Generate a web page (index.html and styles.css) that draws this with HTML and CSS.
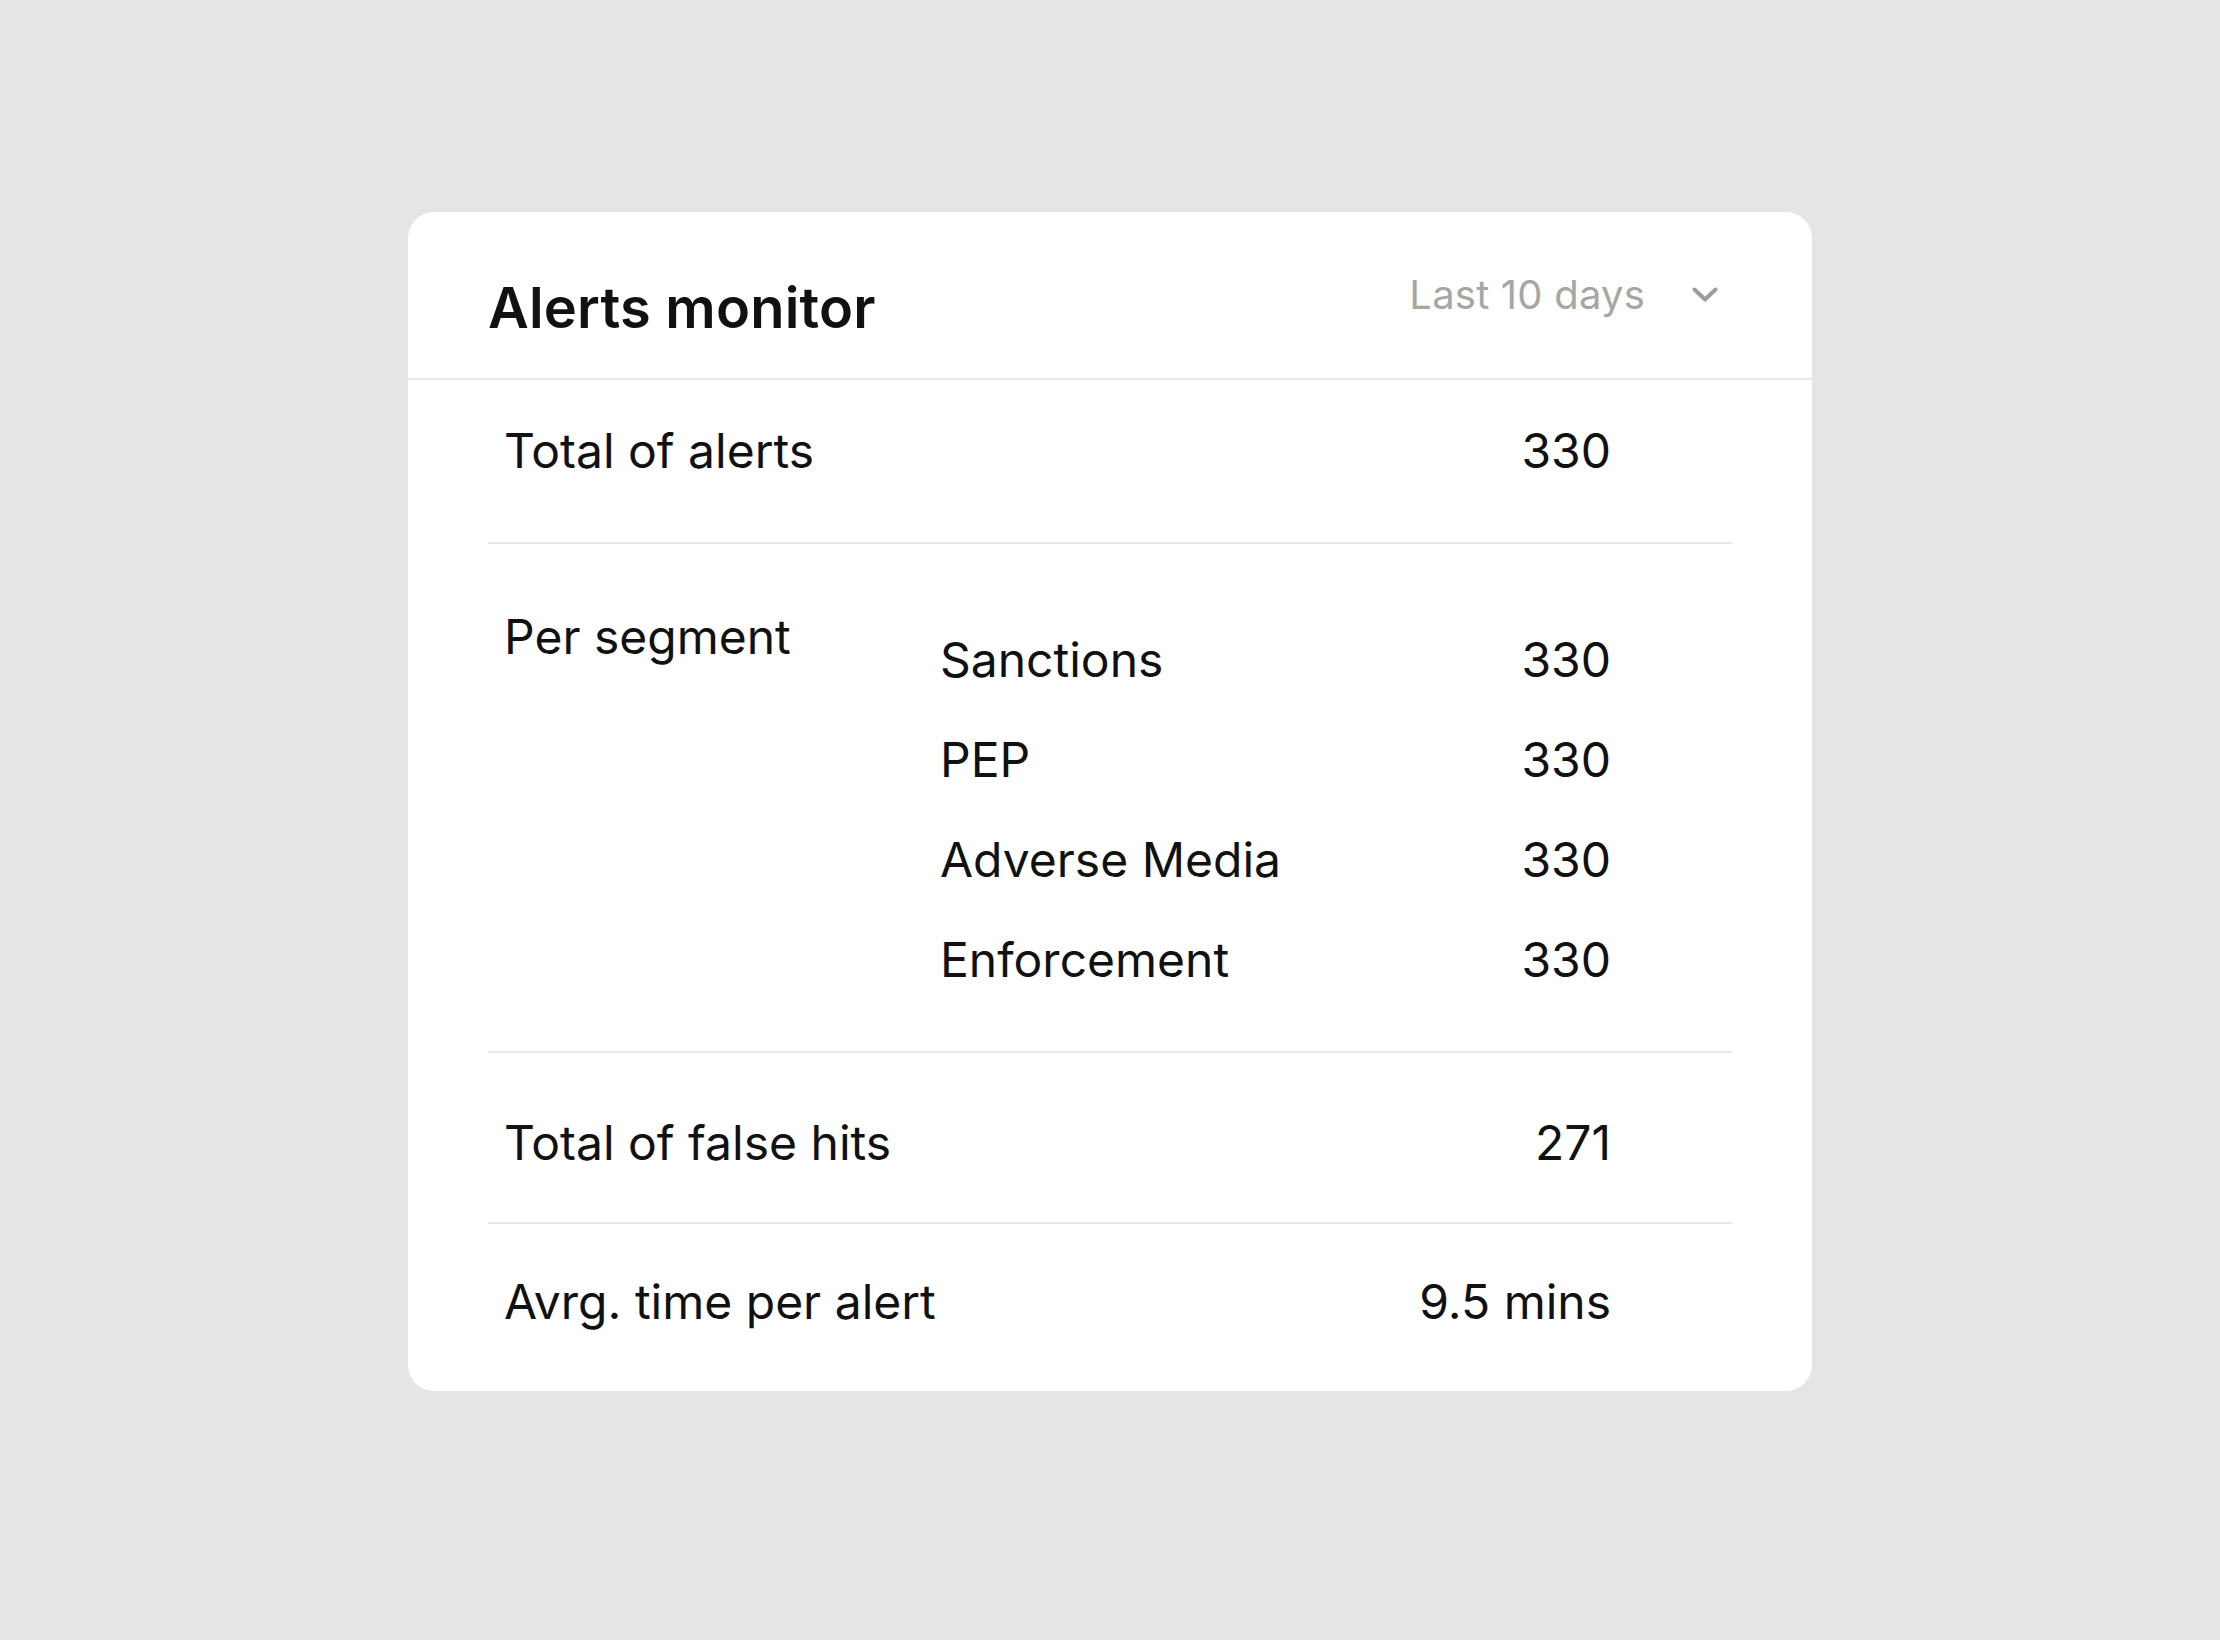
FILE: index.html
```html
<!DOCTYPE html>
<html lang="en">
<head>
<meta charset="utf-8">
<title>Alerts monitor</title>
<link rel="stylesheet" href="styles.css">
</head>
<body>
<section class="card">
  <header class="card-header">
    <h1 class="card-title">Alerts monitor</h1>
    <button class="range-select" type="button">
      <span class="range-label">Last 10 days</span>
      <svg class="chevron" width="26" height="16" viewBox="0 0 26 16" aria-hidden="true">
        <polyline points="2.5,2.5 13,12.5 23.5,2.5" fill="none" stroke="currentColor" stroke-width="4" stroke-linecap="round" stroke-linejoin="round"/>
      </svg>
    </button>
  </header>
  <div class="card-body">
    <div class="stat-row row-total">
      <span class="stat-label">Total of alerts</span>
      <span class="stat-value">330</span>
    </div>
    <div class="stat-row row-segment">
      <span class="stat-label">Per segment</span>
      <ul class="segment-list">
        <li class="segment-item"><span>Sanctions</span><span class="stat-value">330</span></li>
        <li class="segment-item"><span>PEP</span><span class="stat-value">330</span></li>
        <li class="segment-item"><span>Adverse Media</span><span class="stat-value">330</span></li>
        <li class="segment-item"><span>Enforcement</span><span class="stat-value">330</span></li>
      </ul>
    </div>
    <div class="stat-row row-false">
      <span class="stat-label">Total of false hits</span>
      <span class="stat-value">271</span>
    </div>
    <div class="stat-row row-time">
      <span class="stat-label">Avrg. time per alert</span>
      <span class="stat-value">9.5 mins</span>
    </div>
  </div>
</section>
</body>
</html>
```

FILE: styles.css
```css
* {
  box-sizing: border-box;
}

html, body {
  margin: 0;
  padding: 0;
}

body {
  background: #e6e5e3;
  font-family: Inter, "Noto Sans", "Liberation Sans", sans-serif;
  color: #111111;
  padding-top: 212px;
  min-height: 1640px;
}

.card {
  width: 1404px;
  margin: 0 auto;
  background: #ffffff;
  border-radius: 26px;
  overflow: hidden;
}

.card-header {
  display: flex;
  align-items: flex-start;
  justify-content: space-between;
  padding: 60px 94px 42px 80px;
  border-bottom: 2px solid #e7e7e5;
}

.card-title {
  margin: 8px 0 0 0;
  font-size: 56px;
  line-height: 56px;
  font-weight: 600;
  letter-spacing: 0.2px;
  color: #111111;
}

.range-select {
  display: flex;
  align-items: center;
  margin: 3px 0 0 0;
  padding: 0;
  border: 0;
  background: none;
  font-family: inherit;
  cursor: pointer;
  height: 40px;
}

.range-label {
  font-size: 40px;
  line-height: 40px;
  font-weight: 400;
  letter-spacing: 0.2px;
  color: #a6a6a2;
}

.chevron {
  display: block;
  margin-left: 47px;
  margin-top: 0;
  color: #9c9c98;
}

.card-body {
  padding: 0 80px;
}

.stat-row {
  display: flex;
  align-items: flex-start;
  justify-content: space-between;
  padding-left: 16px;
  padding-right: 121px;
  font-size: 48px;
  line-height: 48px;
  border-bottom: 2px solid #e7e7e5;
}

.row-total {
  padding-top: 47px;
  padding-bottom: 67px;
}

.row-segment {
  padding-top: 69px;
  padding-bottom: 67px;
}

.row-false {
  padding-top: 66px;
  padding-bottom: 55px;
}

.row-time {
  padding-top: 54px;
  padding-bottom: 65px;
  border-bottom: 0;
}

.stat-label {
  white-space: nowrap;
}

.row-segment .stat-label {
  flex: 0 0 436px;
}

.segment-list {
  flex: 1;
  list-style: none;
  margin: 23px 0 0 0;
  padding: 0;
  display: flex;
  flex-direction: column;
  gap: 52px;
}

.segment-item {
  display: flex;
  justify-content: space-between;
}

.stat-value {
  white-space: nowrap;
  text-align: right;
}
```
